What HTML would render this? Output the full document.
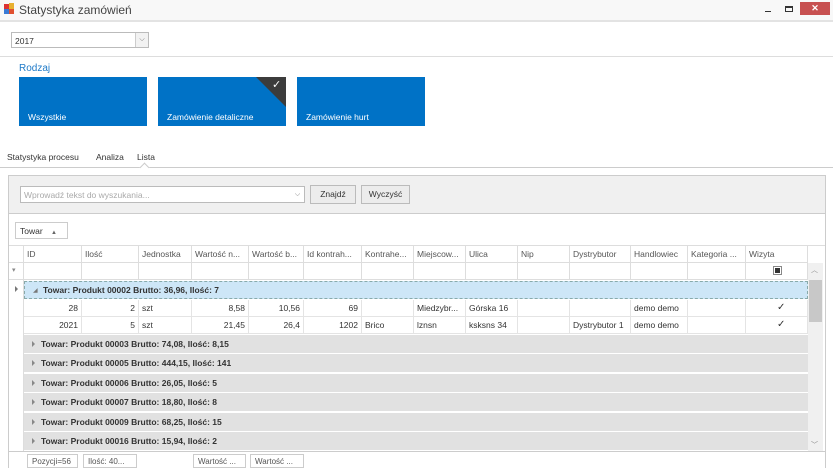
<!DOCTYPE html><html><head><meta charset="utf-8"><style>
*{box-sizing:border-box;margin:0;padding:0}
body{width:833px;height:468px;overflow:hidden;background:#fff;font-family:"Liberation Sans",sans-serif;font-size:8.5px;color:#333;position:relative}
.a{position:absolute}
.tile{position:absolute;top:77px;width:128px;height:49px;background:#0072c6;color:#fff;font-size:8.5px;padding:35px 0 0 9px}
.hc{position:absolute;top:0;height:16px;border-right:1px solid #ddd;padding:3px 0 0 3px;white-space:nowrap;overflow:hidden;color:#555}
.row{position:absolute;left:24px;width:784px;border-bottom:1px solid #e4e4e4}
.c{position:absolute;top:0;height:16px;border-right:1px solid #e4e4e4;padding:3px 3px 0 3px;white-space:nowrap}
.r{text-align:right}
.g{position:absolute;left:24px;width:784px;height:18px;background:#e1e1e1;font-weight:bold;padding:4px 0 0 17px;font-size:8.5px;color:#333}
.g:before{content:"";position:absolute;left:8px;top:6px;border-left:3px solid #888;border-top:3px solid transparent;border-bottom:3px solid transparent}
.btn{position:absolute;border:1px solid #bbb;background:#ececec;text-align:center;padding-top:3px}
.fb{position:absolute;top:454px;height:14px;border:1px solid #ccc;padding:2px 0 0 4px;font-size:8px;color:#555;white-space:nowrap;overflow:hidden}
.chk{position:absolute;left:777px;font-size:10px;color:#333}
</style></head><body>
<div class="a" style="left:0;top:0;width:833px;height:22px;background:#f8f8f8;border-bottom:2px solid #e3e3e3"></div>
<div class="a" style="left:4px;top:4px;width:6px;height:6px;background:#d33"></div>
<div class="a" style="left:9px;top:3px;width:5px;height:6px;background:#e8b030"></div>
<div class="a" style="left:4px;top:9px;width:6px;height:5px;background:#3a7bd5"></div>
<div class="a" style="left:9px;top:9px;width:5px;height:5px;background:#e05030"></div>
<div class="a" style="left:19px;top:3px;font-size:12px;color:#444">Statystyka zamówień</div>
<div class="a" style="left:765px;top:11px;width:6px;height:1px;background:#333"></div>
<div class="a" style="left:785px;top:6px;width:8px;height:6px;border:1px solid #333;border-top-width:2px"></div>
<div class="a" style="left:800px;top:2px;width:30px;height:13px;background:#c75050;color:#fff;text-align:center;font-size:9px;font-weight:bold;line-height:13px">✕</div>
<div class="a" style="left:11px;top:32px;width:138px;height:16px;border:1px solid #bbb"></div>
<div class="a" style="left:15px;top:36px;font-size:8.5px">2017</div>
<div class="a" style="left:135px;top:33px;width:13px;height:14px;border-left:1px solid #ccc;background:#f2f2f2;color:#666;font-size:7px;text-align:center;line-height:14px">⌵</div>
<div class="a" style="left:0;top:56px;width:833px;height:1px;background:#ddd"></div>
<div class="a" style="left:19px;top:63px;color:#1e7ac8;font-size:10px">Rodzaj</div>
<div class="tile" style="left:19px">Wszystkie</div>
<div class="tile" style="left:158px">Zamówienie detaliczne</div>
<div class="a" style="left:256px;top:77px;width:0;height:0;border-top:30px solid #3c3c3c;border-left:30px solid transparent"></div>
<div class="a" style="left:272px;top:78px;color:#fff;font-size:11px">✓</div>
<div class="tile" style="left:297px">Zamówienie hurt</div>
<div class="a" style="left:7px;top:152px;font-size:8.5px;color:#333">Statystyka procesu</div>
<div class="a" style="left:96px;top:152px;font-size:8.5px;color:#333">Analiza</div>
<div class="a" style="left:137px;top:152px;font-size:8.5px;color:#333">Lista</div>
<div class="a" style="left:0;top:167px;width:833px;height:1px;background:#ccc"></div>
<div class="a" style="left:141px;top:164px;width:7px;height:7px;background:#fff;border-left:1px solid #ccc;border-top:1px solid #ccc;transform:rotate(45deg)"></div>
<div class="a" style="left:8px;top:175px;width:818px;height:293px;border:1px solid #ccc;border-bottom:none"></div>
<div class="a" style="left:9px;top:176px;width:816px;height:38px;background:#f0f0f0;border-bottom:1px solid #ccc"></div>
<div class="a" style="left:20px;top:186px;width:285px;height:17px;border:1px solid #bbb;background:#fff;color:#aaa;padding:3px 0 0 3px">Wprowadź tekst do wyszukania...</div>
<div class="a" style="left:291px;top:187px;width:13px;height:15px;color:#777;font-size:7px;text-align:center;line-height:15px">⌵</div>
<div class="btn" style="left:310px;top:185px;width:46px;height:19px">Znajdź</div>
<div class="btn" style="left:361px;top:185px;width:49px;height:19px">Wyczyść</div>
<div class="a" style="left:15px;top:222px;width:53px;height:17px;border:1px solid #ccc;padding:3px 0 0 4px">Towar <span style="font-size:6px;color:#666;margin-left:6px">▲</span></div>
<div class="a" style="left:9px;top:245px;width:816px;height:1px;background:#ddd"></div>
<div class="a" style="left:9px;top:246px;width:799px;height:17px;border-bottom:1px solid #ddd">
<div class="hc" style="left:0;width:15px"></div>
<div class="hc" style="left:15px;width:58px">ID</div>
<div class="hc" style="left:73px;width:57px">Ilość</div>
<div class="hc" style="left:130px;width:53px">Jednostka</div>
<div class="hc" style="left:183px;width:57px">Wartość n...</div>
<div class="hc" style="left:240px;width:55px">Wartość b...</div>
<div class="hc" style="left:295px;width:58px">Id kontrah...</div>
<div class="hc" style="left:353px;width:52px">Kontrahe...</div>
<div class="hc" style="left:405px;width:52px">Miejscow...</div>
<div class="hc" style="left:457px;width:52px">Ulica</div>
<div class="hc" style="left:509px;width:52px">Nip</div>
<div class="hc" style="left:561px;width:61px">Dystrybutor</div>
<div class="hc" style="left:622px;width:57px">Handlowiec</div>
<div class="hc" style="left:679px;width:58px">Kategoria ...</div>
<div class="hc" style="left:737px;width:62px">Wizyta</div>
</div>
<div class="a" style="left:9px;top:263px;width:799px;height:17px;border-bottom:1px solid #ddd">
<div class="hc" style="left:0;width:15px;color:#888;font-size:7px;padding-left:3px">▾</div>
<div class="hc" style="left:15px;width:58px"></div><div class="hc" style="left:73px;width:57px"></div><div class="hc" style="left:130px;width:53px"></div><div class="hc" style="left:183px;width:57px"></div><div class="hc" style="left:240px;width:55px"></div><div class="hc" style="left:295px;width:58px"></div><div class="hc" style="left:353px;width:52px"></div><div class="hc" style="left:405px;width:52px"></div><div class="hc" style="left:457px;width:52px"></div><div class="hc" style="left:509px;width:52px"></div><div class="hc" style="left:561px;width:61px"></div><div class="hc" style="left:622px;width:57px"></div><div class="hc" style="left:679px;width:58px"></div><div class="hc" style="left:737px;width:62px"></div>
</div>
<div class="a" style="left:773px;top:266px;width:9px;height:9px;border:1px solid #888;padding:1px"><div style="width:5px;height:5px;background:#333"></div></div>
<div class="a" style="left:9px;top:280px;width:15px;height:172px;border-right:1px solid #ddd"></div>
<div class="a" style="left:15px;top:286px;border-left:3px solid #777;border-top:3px solid transparent;border-bottom:3px solid transparent"></div>
<div class="a" style="left:24px;top:281px;width:784px;height:18px;background:#cde6f7;border:1px dashed #8aa;font-weight:bold;padding:3px 0 0 18px">Towar: Produkt 00002 Brutto: 36,96, Ilość: 7</div>
<div class="a" style="left:33px;top:287px;font-size:6px;color:#777">◢</div>
<div class="row" style="top:300px;height:17px">
<div class="c r" style="left:0;width:58px">28</div><div class="c r" style="left:58px;width:57px">2</div><div class="c" style="left:115px;width:53px">szt</div><div class="c r" style="left:168px;width:57px">8,58</div><div class="c r" style="left:225px;width:55px">10,56</div><div class="c r" style="left:280px;width:58px">69</div><div class="c" style="left:338px;width:52px"></div><div class="c" style="left:390px;width:52px">Miedzybr...</div><div class="c" style="left:442px;width:52px">Górska 16</div><div class="c" style="left:494px;width:52px"></div><div class="c" style="left:546px;width:61px"></div><div class="c" style="left:607px;width:57px">demo demo</div><div class="c" style="left:664px;width:58px"></div><div class="c" style="left:722px;width:62px"></div></div>
<div class="chk" style="top:302px">✓</div>
<div class="row" style="top:317px;height:17px">
<div class="c r" style="left:0;width:58px">2021</div><div class="c r" style="left:58px;width:57px">5</div><div class="c" style="left:115px;width:53px">szt</div><div class="c r" style="left:168px;width:57px">21,45</div><div class="c r" style="left:225px;width:55px">26,4</div><div class="c r" style="left:280px;width:58px">1202</div><div class="c" style="left:338px;width:52px">Brico</div><div class="c" style="left:390px;width:52px">lznsn</div><div class="c" style="left:442px;width:52px">ksksns 34</div><div class="c" style="left:494px;width:52px"></div><div class="c" style="left:546px;width:61px">Dystrybutor 1</div><div class="c" style="left:607px;width:57px">demo demo</div><div class="c" style="left:664px;width:58px"></div><div class="c" style="left:722px;width:62px"></div></div>
<div class="chk" style="top:319px">✓</div>
<div class="g" style="top:335px">Towar: Produkt 00003 Brutto: 74,08, Ilość: 8,15</div>
<div class="g" style="top:354px">Towar: Produkt 00005 Brutto: 444,15, Ilość: 141</div>
<div class="g" style="top:374px">Towar: Produkt 00006 Brutto: 26,05, Ilość: 5</div>
<div class="g" style="top:393px">Towar: Produkt 00007 Brutto: 18,80, Ilość: 8</div>
<div class="g" style="top:413px">Towar: Produkt 00009 Brutto: 68,25, Ilość: 15</div>
<div class="g" style="top:432px">Towar: Produkt 00016 Brutto: 15,94, Ilość: 2</div>
<div class="a" style="left:808px;top:263px;width:15px;height:189px;background:#f0f0f0"></div>
<div class="a" style="left:809px;top:280px;width:13px;height:42px;background:#c8c8c8"></div>
<div class="a" style="left:811px;top:265px;font-size:7px;color:#888">︿</div>
<div class="a" style="left:811px;top:440px;font-size:7px;color:#888">﹀</div>
<div class="a" style="left:9px;top:451px;width:816px;height:1px;background:#ccc"></div>
<div class="fb" style="left:27px;width:51px">Pozycji=56</div>
<div class="fb" style="left:83px;width:54px">Ilość: 40...</div>
<div class="fb" style="left:193px;width:53px">Wartość ...</div>
<div class="fb" style="left:250px;width:54px">Wartość ...</div>
</body></html>
